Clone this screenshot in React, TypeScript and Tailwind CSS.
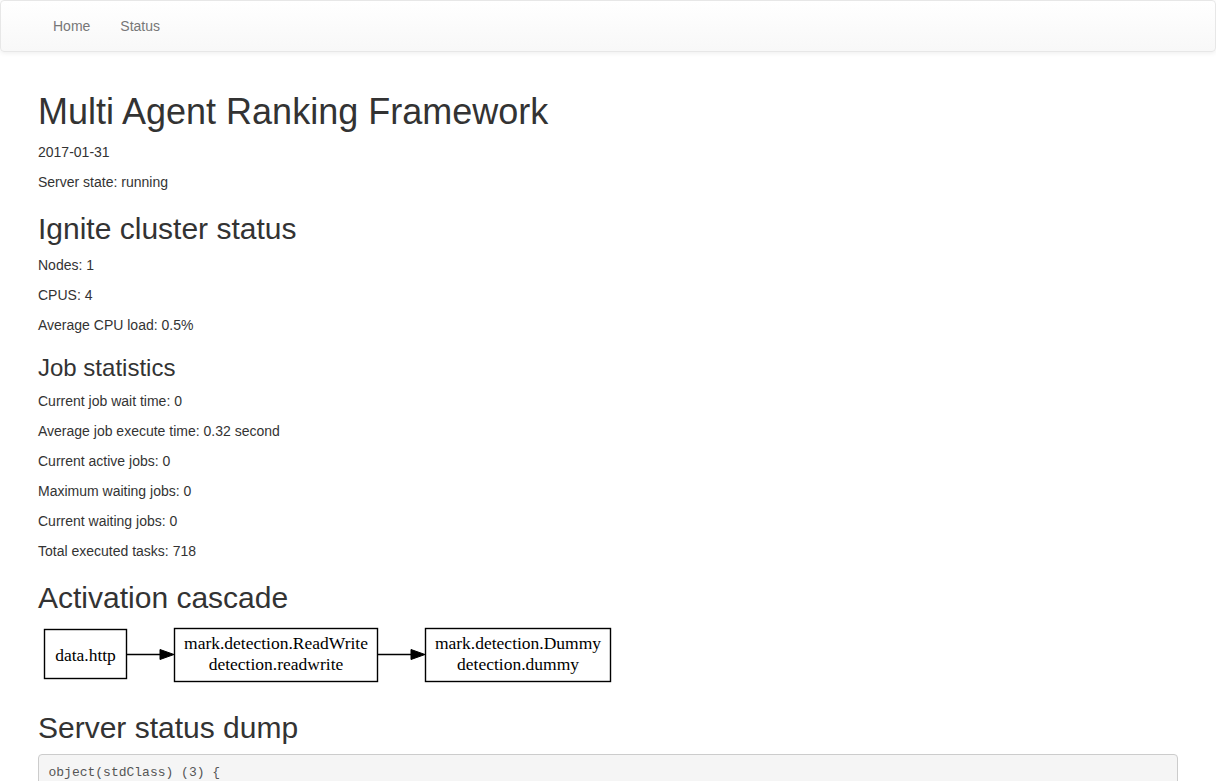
export default function App() {
  const jobStats = [
    'Current job wait time: 0',
    'Average job execute time: 0.32 second',
    'Current active jobs: 0',
    'Maximum waiting jobs: 0',
    'Current waiting jobs: 0',
    'Total executed tasks: 718',
  ];

  return (
    <div className="min-h-screen bg-white text-[14px] leading-[20px] text-[#333] font-['Liberation_Sans',Arial,sans-serif]">
      {/* Navbar */}
      <nav className="mb-5 h-[52px] rounded-[4px] border border-[#e7e7e7] bg-gradient-to-b from-white to-[#f8f8f8] shadow-[inset_0_1px_0_rgba(255,255,255,0.15),0_1px_5px_rgba(0,0,0,0.075)]">
        <div className="mx-auto w-[1170px] px-[15px]">
          <ul className="flex">
            <li>
              <a href="#" className="block px-[15px] py-[15px] text-[#777] [text-shadow:0_1px_0_rgba(255,255,255,0.25)]">
                Home
              </a>
            </li>
            <li>
              <a href="#" className="block px-[15px] py-[15px] text-[#777] [text-shadow:0_1px_0_rgba(255,255,255,0.25)]">
                Status
              </a>
            </li>
          </ul>
        </div>
      </nav>

      <div className="flow-root mx-auto w-[1170px] px-[15px]">
        <h1 className="mt-5 mb-2.5 text-[36px] leading-[39.6px]">Multi Agent Ranking Framework</h1>
        <p className="mb-2.5">2017-01-31</p>
        <p className="mb-2.5">Server state: running</p>

        <h2 className="mt-5 mb-2.5 text-[30px] leading-[33px]">Ignite cluster status</h2>
        <p className="mb-2.5">Nodes: 1</p>
        <p className="mb-2.5">CPUS: 4</p>
        <p className="mb-2.5">Average CPU load: 0.5%</p>

        <h3 className="mt-5 mb-2.5 text-[24px] leading-[26.4px]">Job statistics</h3>
        {jobStats.map((s) => (
          <p key={s} className="mb-2.5">{s}</p>
        ))}

        <h2 className="mt-5 mb-2.5 text-[30px] leading-[33px]">Activation cascade</h2>
        <div className="pb-[7.5px]">
          <svg width="580" height="59" viewBox="0 0 580 59" className="block">
            <g fill="none" stroke="#000" strokeWidth="1.4">
              <rect x="6.5" y="5.5" width="82" height="49" />
              <rect x="136.5" y="4.5" width="203" height="53" />
              <rect x="387.5" y="4.5" width="185" height="53" />
              <line x1="88.5" y1="30.5" x2="124" y2="30.5" />
              <line x1="339.5" y1="30.5" x2="375" y2="30.5" />
            </g>
            <polygon points="122,25.5 136,30.5 122,35.5" fill="#000" stroke="#000" />
            <polygon points="373,25.5 387,30.5 373,35.5" fill="#000" stroke="#000" />
            <g fontFamily="'Liberation Serif', 'Times New Roman', serif" fontSize="17.5" fill="#000" textAnchor="middle">
              <text x="47.5" y="36.5">data.http</text>
              <text x="238" y="25">mark.detection.ReadWrite</text>
              <text x="238" y="46">detection.readwrite</text>
              <text x="480" y="25">mark.detection.Dummy</text>
              <text x="480" y="46">detection.dummy</text>
            </g>
          </svg>
        </div>

        <h2 className="mt-5 mb-2.5 text-[30px] leading-[33px]">Server status dump</h2>
        <pre className="mb-2.5 rounded-[4px] border border-[#ccc] bg-[#f5f5f5] p-[9.5px] text-[13px] leading-[18.57px] text-[#555] font-['Liberation_Mono','Courier_New',monospace] whitespace-pre-wrap break-all">
{`object(stdClass) (3) {
  ["state"]=>
  string(7) "running"
  ["date"]=>
  string(10) "2017-01-31"
  ["cluster"]=>
  object(stdClass) (3) {
    ["nodes"]=>
    int(1)
    ["cpus"]=>
    int(4)
    ["load"]=>
    float(0.005)
  }
}`}
        </pre>
      </div>
    </div>
  );
}
